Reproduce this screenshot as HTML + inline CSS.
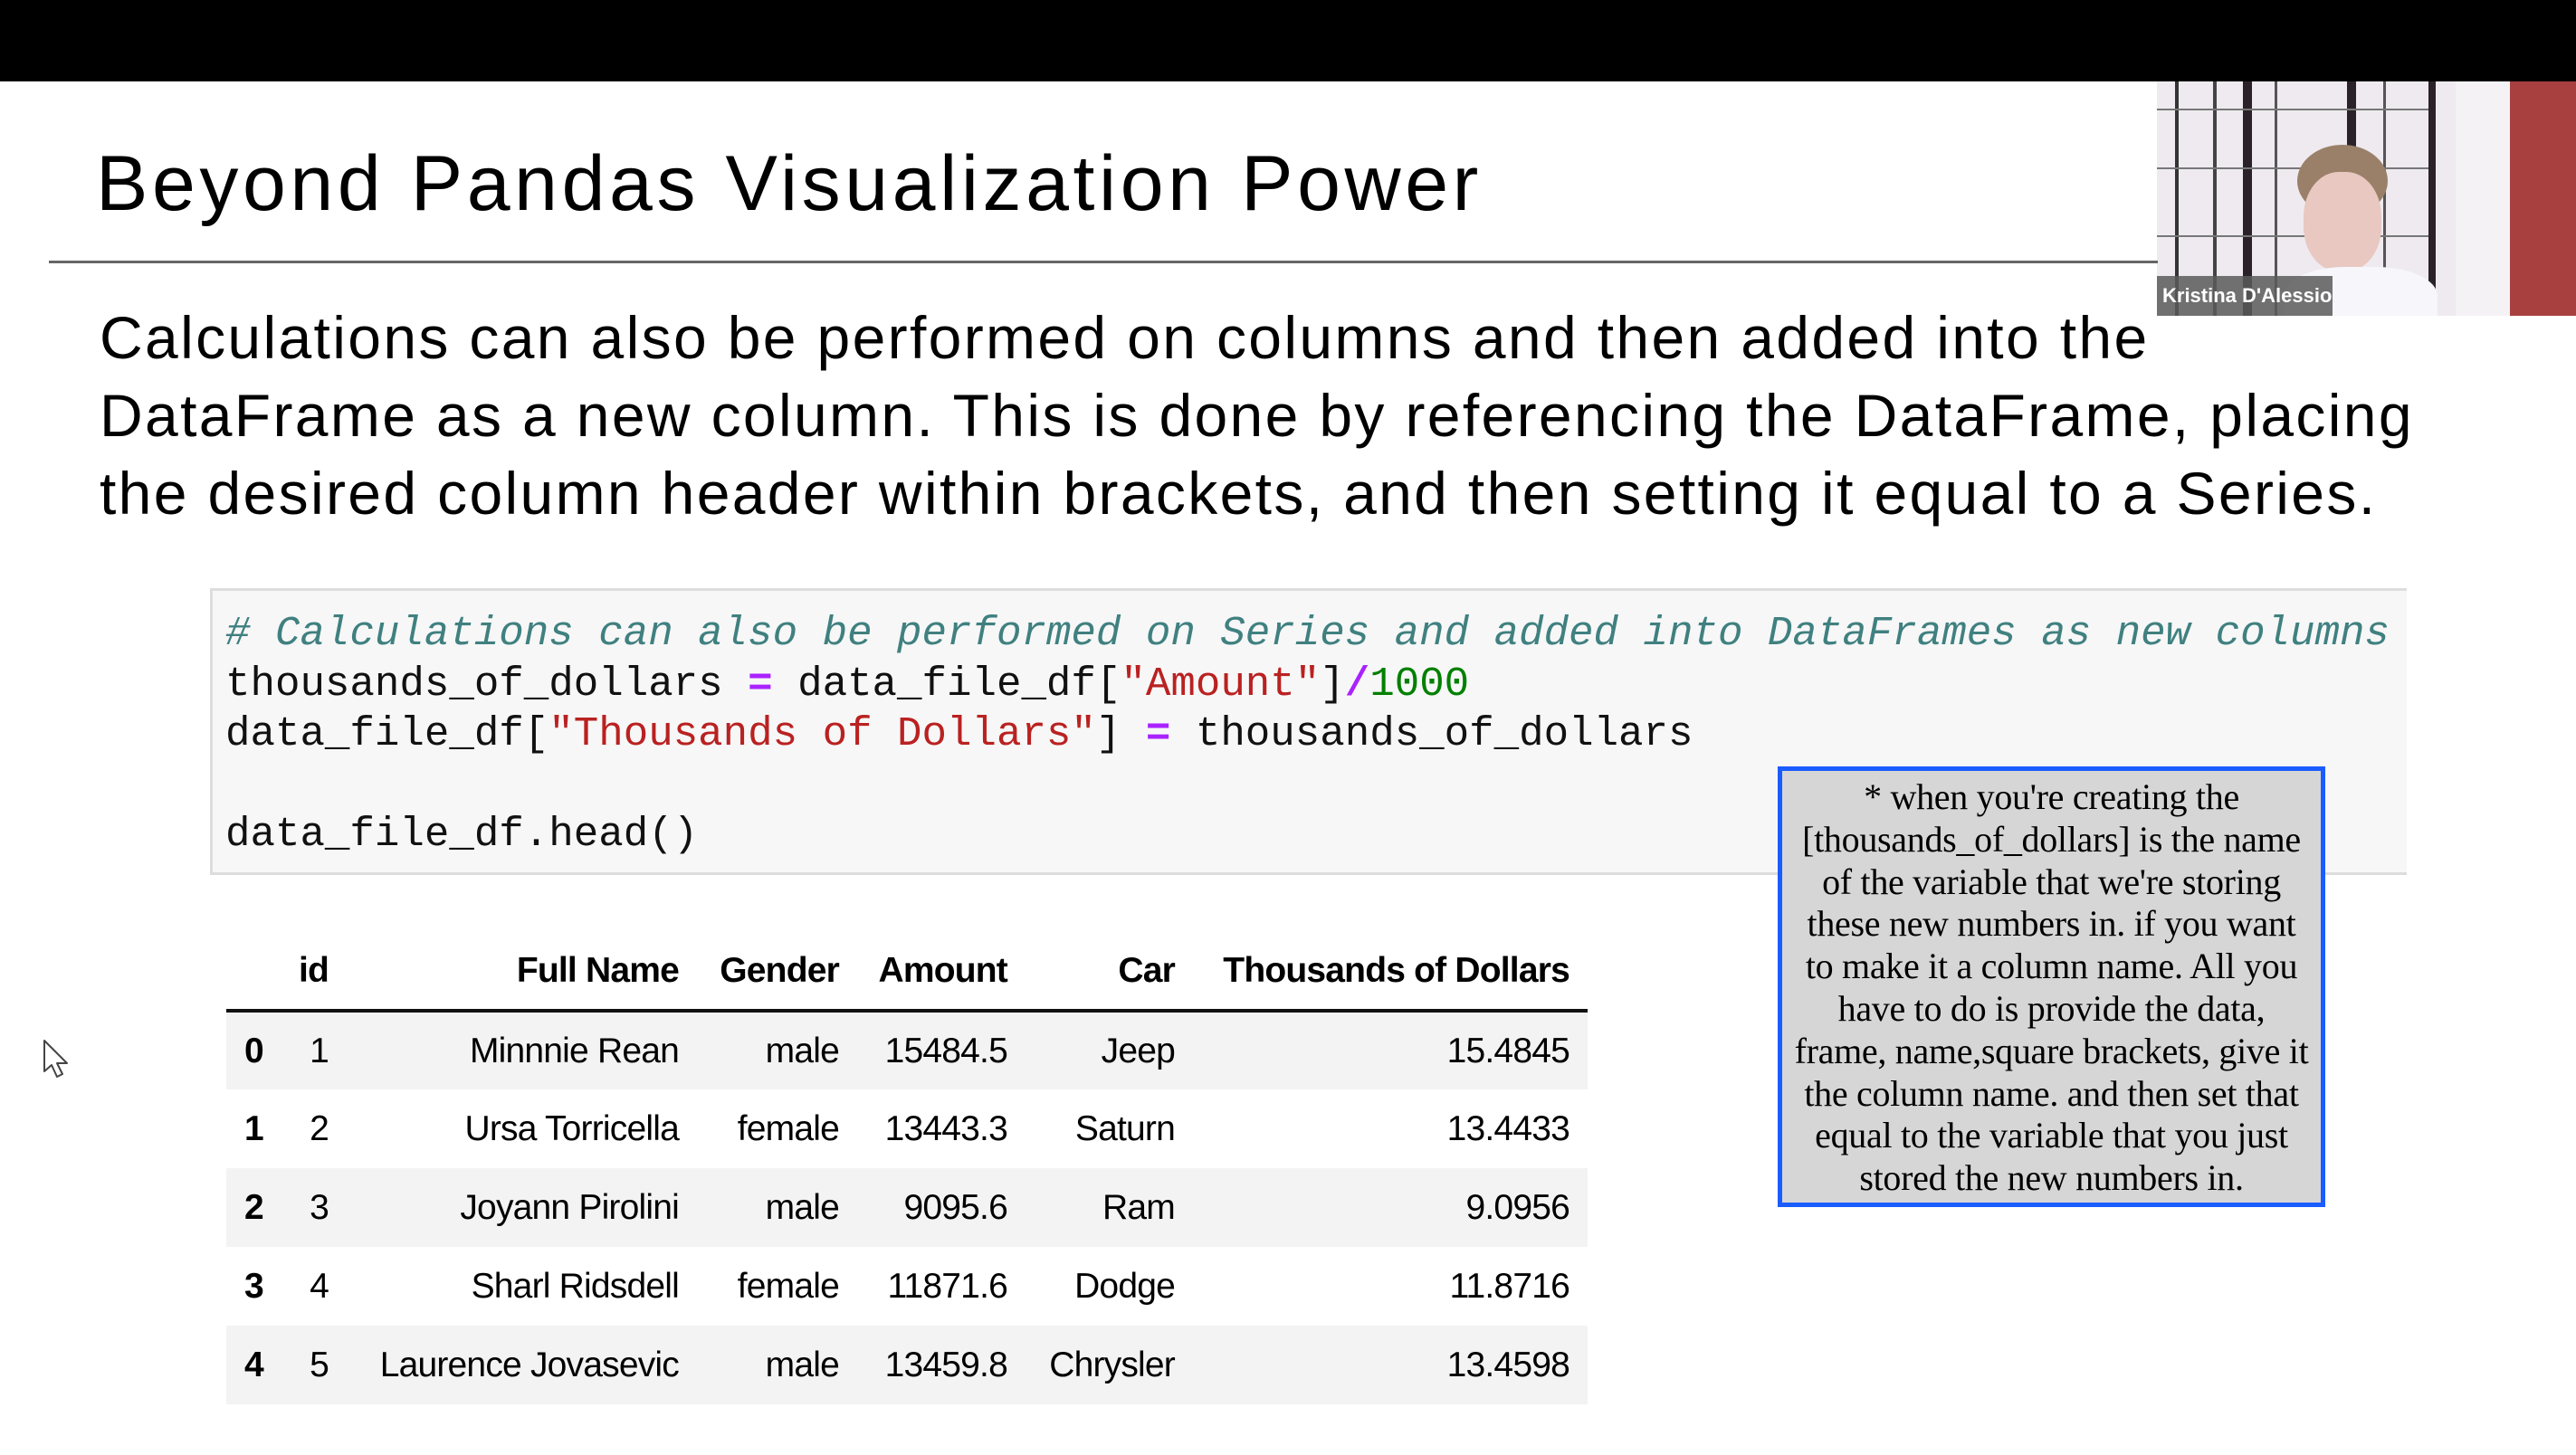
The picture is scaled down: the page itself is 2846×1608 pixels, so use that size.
<!DOCTYPE html>
<html><head><meta charset="utf-8">
<style>
*{margin:0;padding:0;box-sizing:border-box}
body{width:2846px;height:1608px;background:#fff;position:relative;overflow:hidden;font-family:"Liberation Sans",Arial,sans-serif;color:#000}
.abs{position:absolute}
.title{left:106px;top:148px;font-size:86px;line-height:110px;white-space:nowrap;letter-spacing:4.6px}
.rule{left:54px;top:288px;width:2330px;height:3px;background:#666}
.para{left:110px;top:330px;font-size:66px;line-height:86px;white-space:nowrap;letter-spacing:2.35px}
.code{left:232px;top:650px;width:2427px;height:317px;background:#f7f7f7;border-left:3px solid #ddd;border-top:3px solid #ddd;border-bottom:3px solid #ddd}
.code pre{position:absolute;left:14px;top:20px;font-family:"Liberation Mono",monospace;font-size:45.8px;line-height:55.5px;color:#111}
.c{color:#408080;font-style:italic}.s{color:#ba2121}.o{color:#aa22ff;font-weight:bold}.n{color:#008000}
table{position:absolute;left:250px;top:1030px;width:1504px;table-layout:fixed;border-collapse:collapse;font-size:39px;font-family:"Liberation Sans",Arial,sans-serif;letter-spacing:-0.8px}
th{font-weight:bold;text-align:right;height:87px;padding:0 20px 0 0;border-bottom:4px solid #111;vertical-align:middle;white-space:nowrap}
td{text-align:right;height:87px;padding:0 20px 0 0;white-space:nowrap}
td:first-child{font-weight:bold;text-align:left;padding-left:20px}
tr.g td{background:#f3f3f3}
.note{left:1964px;top:847px;width:605px;height:487px;background:#d6d6d6;border:5px solid #1a5cff;font-family:"Liberation Serif","Times New Roman",serif;font-size:40px;line-height:46.8px;text-align:center;padding-top:6px;letter-spacing:-0.3px;white-space:nowrap}
</style></head><body>
<div class="abs" style="left:0;top:0;width:2846px;height:90px;background:#000"></div>

<div class="abs" style="left:2383px;top:90px;width:463px;height:259px;background:#f4f2f5;overflow:hidden">
  <div class="abs" style="left:0;top:0;width:330px;height:259px;background:#eeeaf0"></div>
  <div class="abs" style="left:20px;top:0;width:4px;height:259px;background:#333"></div>
  <div class="abs" style="left:62px;top:0;width:4px;height:259px;background:#444"></div>
  <div class="abs" style="left:95px;top:0;width:10px;height:259px;background:#2a2228"></div>
  <div class="abs" style="left:130px;top:0;width:3px;height:259px;background:#555"></div>
  <div class="abs" style="left:210px;top:0;width:10px;height:259px;background:#2a2228"></div>
  <div class="abs" style="left:250px;top:0;width:3px;height:259px;background:#555"></div>
  <div class="abs" style="left:300px;top:0;width:8px;height:259px;background:#2a2228"></div>
  <div class="abs" style="left:0;top:30px;width:300px;height:2px;background:#777"></div>
  <div class="abs" style="left:0;top:95px;width:300px;height:2px;background:#777"></div>
  <div class="abs" style="left:0;top:170px;width:300px;height:2px;background:#777"></div>
  <div class="abs" style="left:155px;top:70px;width:100px;height:80px;border-radius:50%;background:#9a8068"></div>
  <div class="abs" style="left:162px;top:100px;width:86px;height:110px;border-radius:45%;background:#e8c8c0"></div>
  <div class="abs" style="left:140px;top:205px;width:170px;height:80px;border-radius:40% 40% 0 0;background:#f6f6fb"></div>
  <div class="abs" style="left:390px;top:0;width:73px;height:259px;background:#a8403f"></div>
  <div class="abs" style="left:0;top:215px;width:194px;height:44px;background:rgba(90,90,90,.85);color:#fff;font-size:22px;line-height:44px;padding-left:6px;font-weight:bold">Kristina D'Alessio</div>
</div>

<div class="abs title">Beyond Pandas Visualization Power</div>
<div class="abs rule"></div>
<div class="abs para">Calculations can also be performed on columns and then added into the<br>DataFrame as a new column. This is done by referencing the DataFrame, placing<br>the desired column header within brackets, and then setting it equal to a Series.</div>

<div class="abs code"><pre><span class="c"># Calculations can also be performed on Series and added into DataFrames as new columns</span>
thousands_of_dollars <span class="o">=</span> data_file_df[<span class="s">"Amount"</span>]<span class="o">/</span><span class="n">1000</span>
data_file_df[<span class="s">"Thousands of Dollars"</span>] <span class="o">=</span> thousands_of_dollars

data_file_df.head()</pre></div>

<table>
<colgroup><col style="width:63px"><col style="width:70px"><col style="width:387px"><col style="width:177px"><col style="width:186px"><col style="width:185px"><col style="width:436px"></colgroup>
<tr><th></th><th>id</th><th>Full Name</th><th>Gender</th><th>Amount</th><th>Car</th><th>Thousands of Dollars</th></tr>
<tr class="g"><td>0</td><td>1</td><td>Minnnie Rean</td><td>male</td><td>15484.5</td><td>Jeep</td><td>15.4845</td></tr>
<tr><td>1</td><td>2</td><td>Ursa Torricella</td><td>female</td><td>13443.3</td><td>Saturn</td><td>13.4433</td></tr>
<tr class="g"><td>2</td><td>3</td><td>Joyann Pirolini</td><td>male</td><td>9095.6</td><td>Ram</td><td>9.0956</td></tr>
<tr><td>3</td><td>4</td><td>Sharl Ridsdell</td><td>female</td><td>11871.6</td><td>Dodge</td><td>11.8716</td></tr>
<tr class="g"><td>4</td><td>5</td><td>Laurence Jovasevic</td><td>male</td><td>13459.8</td><td>Chrysler</td><td>13.4598</td></tr>
</table>

<div class="abs note">* when you're creating the<br>[thousands_of_dollars] is the name<br>of the variable that we're storing<br>these new numbers in. if you want<br>to make it a column name. All you<br>have to do is provide the data,<br>frame, name,square brackets, give it<br>the column name. and then set that<br>equal to the variable that you just<br>stored the new numbers in.</div>

<svg class="abs" style="left:46px;top:1148px" width="34" height="46" viewBox="0 0 34 46"><path d="M3 2 L3 36 L11 29 L17 42 L23 39 L17 27 L28 27 Z" fill="#fff" stroke="#444" stroke-width="2" stroke-linejoin="round"/></svg>
</body></html>
